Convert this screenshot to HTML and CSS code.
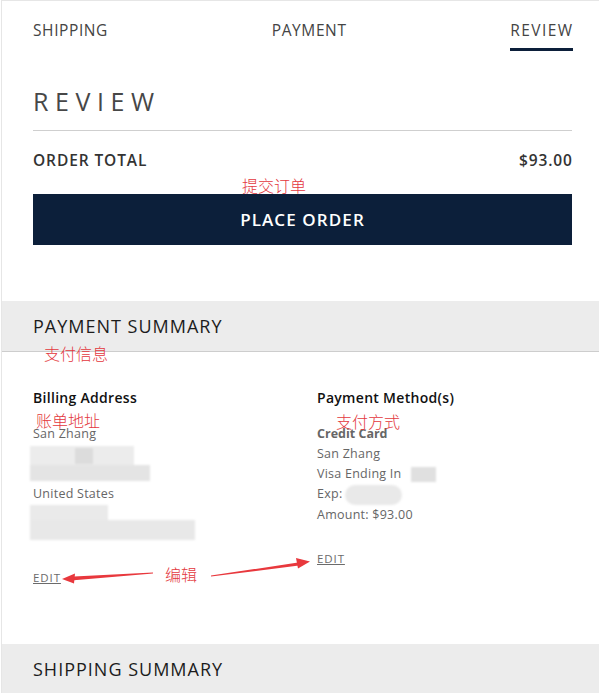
FILE: index.html
```html
<!DOCTYPE html>
<html lang="en">
<head>
<meta charset="utf-8">
<title>Review</title>
<link rel="stylesheet" href="styles.css">
</head>
<body>
<div class="page">
  <div class="top">
    <nav class="tabs">
      <span class="tab t1">SHIPPING</span>
      <span class="tab t2">PAYMENT</span>
      <span class="tab t3 active">REVIEW</span>
    </nav>
    <h1 class="title">REVIEW</h1>
    <div class="total"><span>ORDER TOTAL</span><span>$93.00</span></div>
    <button class="place" type="button">PLACE ORDER</button>
  </div>

  <section class="summary">
    <h2 class="sec-head">PAYMENT SUMMARY</h2>
    <div class="cols">
      <div class="col">
        <h3 class="col-title">Billing Address</h3>
        <p class="line">San Zhang</p>
        <div class="redact r1">
          <span class="blk b1"></span><span class="blk b2"></span><span class="blk b3"></span>
        </div>
        <p class="line">United States</p>
        <div class="redact r2">
          <span class="blk b4"></span><span class="blk b5"></span>
        </div>
        <a class="edit" href="#">EDIT</a>
      </div>
      <div class="col">
        <h3 class="col-title">Payment Method(s)</h3>
        <p class="line strong">Credit Card</p>
        <p class="line">San Zhang</p>
        <p class="line">Visa Ending In <span class="mask m1"></span></p>
        <p class="line">Exp:<span class="mask m2"></span></p>
        <p class="line">Amount: $93.00</p>
        <a class="edit" href="#">EDIT</a>
      </div>
    </div>
  </section>

  <h2 class="sec-head">SHIPPING SUMMARY</h2>
</div>

<span class="note n1">提交订单</span>
<span class="note n2">支付信息</span>
<span class="note n3">账单地址</span>
<span class="note n4">支付方式</span>
<span class="note n5">编辑</span>

<svg class="arrows" width="599" height="693" viewBox="0 0 599 693" aria-hidden="true">
  <polygon points="153,572.6 74,576.4 74,580.2 153,573.6" fill="#e8383d"/>
  <polygon points="62,579 75,573.5 74,583.5" fill="#e8383d"/>
  <polygon points="211,575.6 298,562.5 299,565.6 211,576.6" fill="#e8383d"/>
  <polygon points="310,561.5 296,558 298,568.5" fill="#e8383d"/>
</svg>
</body>
</html>
```

FILE: styles.css
```css
* { box-sizing: border-box; }

html, body {
  margin: 0;
  padding: 0;
  background: #fff;
}

body {
  position: relative;
  width: 599px;
  height: 693px;
  overflow: hidden;
  font-family: "Open Sans", "Noto Sans", sans-serif;
  color: #333;
}

.page {
  margin-left: 1px;
  border-top: 1px solid #e6e6e6;
  border-left: 1px solid #e6e6e6;
}

.top {
  padding: 19px 27px 56px 31px;
}

.tabs {
  display: flex;
  justify-content: space-between;
}

.tab {
  font-size: 15.5px;
  line-height: 20px;
  letter-spacing: 0.6px;
  color: #444;
  padding-bottom: 8px;
  border-bottom: 3px solid transparent;
}

.t3 { letter-spacing: 1.4px; margin-right: -1.4px; }

.tab.active {
  border-bottom-color: #0c1f3a;
}

.title {
  margin: 35px 0 0;
  padding-bottom: 14px;
  border-bottom: 1px solid #cfcfcf;
  font-size: 25px;
  line-height: 30px;
  font-weight: 400;
  letter-spacing: 6.6px;
  color: #474747;
}

.total {
  display: flex;
  justify-content: space-between;
  margin-top: 19px;
  font-size: 15.5px;
  line-height: 20px;
  font-weight: 600;
  letter-spacing: 0.9px;
  color: #333;
}

.total span:last-child { margin-right: -0.9px; }

.place {
  display: block;
  width: 100%;
  height: 51px;
  margin-top: 24px;
  border: 0;
  background: #0c1f3a;
  color: #fff;
  font-family: inherit;
  font-size: 17px;
  font-weight: 600;
  letter-spacing: 1.1px;
}

.sec-head {
  margin: 0;
  height: 51px;
  padding-left: 31px;
  background: #ececec;
  border-bottom: 1px solid #cdcdcd;
  font-size: 18px;
  line-height: 50px;
  font-weight: 400;
  letter-spacing: 1px;
  color: #1c1c1c;
}

.cols {
  display: grid;
  grid-template-columns: 284px 1fr;
  padding: 36px 27px 56px 31px;
}

.col {
  display: flex;
  flex-direction: column;
  align-items: flex-start;
}

.col-title {
  margin: 0 0 16px;
  font-size: 14px;
  line-height: 20px;
  font-weight: 600;
  letter-spacing: 0.3px;
  color: #111;
}

.line {
  margin: 0;
  font-size: 12.5px;
  line-height: 20px;
  letter-spacing: 0.25px;
  color: #666;
  white-space: nowrap;
}

.line.strong {
  font-weight: 700;
  letter-spacing: 0;
}

.redact {
  position: relative;
  width: 170px;
  height: 40px;
  margin-left: -3px;
  filter: blur(1.2px);
}

.blk {
  position: absolute;
  display: block;
  background: #e8e8e8;
}

.r1 .b1 { left: 0; top: 2px; width: 104px; height: 22px; background: #ececec; }
.r1 .b2 { left: 45px; top: 4px; width: 18px; height: 16px; background: #dcdcdc; }
.r1 .b3 { left: 0; top: 21px; width: 120px; height: 16px; background: #e4e4e4; }
.r2 .b4 { left: 0; top: 1px; width: 78px; height: 20px; background: #eaeaea; }
.r2 .b5 { left: 0; top: 16px; width: 165px; height: 20px; background: #e8e8e8; }

.mask {
  display: inline-block;
  vertical-align: middle;
  background: #e0e0e0;
  filter: blur(1px);
}

.m1 { width: 25px; height: 15px; margin-left: 6px; }
.m2 { width: 57px; height: 20px; margin-left: 3px; border-radius: 10px; background: #e9e9e9; }

.edit {
  margin-top: 24px;
  font-size: 11.5px;
  line-height: 20px;
  color: #6b6b6b;
  text-decoration: underline;
  letter-spacing: 0.9px;
}

.note {
  position: absolute;
  font-family: "Noto Sans CJK SC", sans-serif;
  font-weight: 300;
  font-size: 16px;
  line-height: 16px;
  color: #e3373d;
  white-space: nowrap;
}

.n1 { left: 242px; top: 177px; }
.n2 { left: 44px; top: 345px; }
.n3 { left: 36px; top: 412px; }
.n4 { left: 336px; top: 413px; }
.n5 { left: 165px; top: 566px; }

.arrows {
  position: absolute;
  left: 0;
  top: 0;
  pointer-events: none;
}
```
